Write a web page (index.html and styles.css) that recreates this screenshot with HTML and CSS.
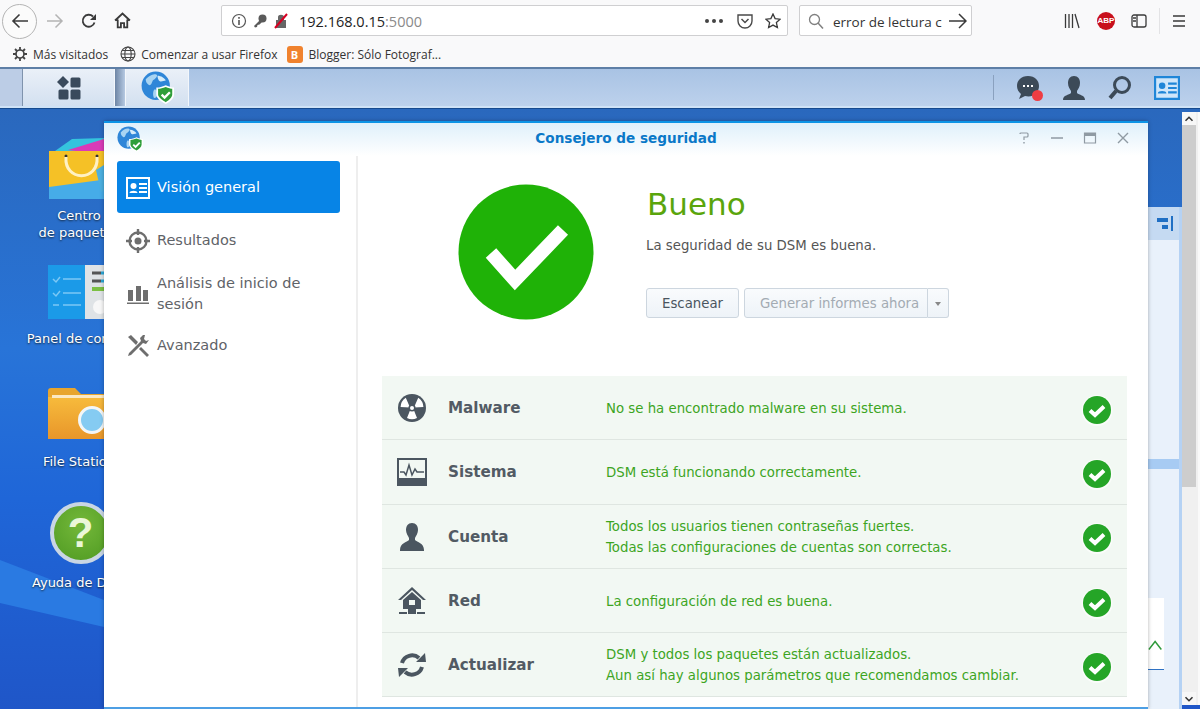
FILE: index.html
```html
<!DOCTYPE html>
<html>
<head>
    <title>Consejero de seguridad</title>
    <link rel="stylesheet" href="styles.css">
</head>
<body>
    <svg class="defs" width="0" height="0">
        <symbol id="shield-globe" viewBox="0 0 28 28">
            <circle cx="12.5" cy="12.5" r="12" fill="#2f86d8"/>
            <path d="M4 7c3-3 6-5 9-4 2 1-1 4-3 5-1 2-1 4-3 4-2-1-3-3-3-5zM11 16c2-1 3 1 3 3s-1 4-3 4c-1-2-1-5 0-7z" fill="#a9d4f2"/>
            <path d="M14 4c3 0 6 2 7 4l-4 1c-2 0-3-3-3-5z" fill="#d5ecfa"/>
            <path d="M13 14c3 0 6-1 8-2 2 1 5 2 7 2v6c0 3-3 6-7 8-4-2-8-5-8-8z" fill="#fff"/>
            <path d="M14.500 15c2 0 4-.5 6.500-1.500 2 1 4.500 1.500 5.500 1.500v5c0 2.500-2.500 4.500-5.500 6.500-3-2-6.500-4-6.500-6.500z" fill="#2f9e3a"/>
            <path d="M17.500 20l2.500 2.500 4.500-4.500" fill="none" stroke="#fff" stroke-width="2"/>
        </symbol>
        <symbol id="ok" viewBox="0 0 32 32">
            <circle cx="16" cy="16.5" r="15.5" fill="#fafcfa"/>
            <circle cx="16" cy="16" r="14" fill="#25a527"/>
            <path d="M9 16.5l5 4.500 9-8.500" fill="none" stroke="#fff" stroke-width="4"/>
        </symbol>
        <symbol id="card" viewBox="0 0 24 22">
            <path fill-rule="evenodd" d="M0 0h24v22H0zM2 2v18h20V2z"/>
            <circle cx="7.5" cy="9" r="3"/>
            <path d="M3.500 16c0-3 8-3 8 0zM13 6h8v2h-8zM13 10h8v2h-8zM13 14h8v2h-8z"/>
        </symbol>
    </svg>

    <header class="browser">
        <div class="nav-row">
            <span class="back-btn">
                <svg width="18" height="16" viewBox="0 0 18 16"><path d="M17 8H2M8.500 1.500L2 8l6.500 6.500" fill="none" stroke="#3a3a3a" stroke-width="1.6"/></svg>
            </span>
            <svg class="nav-icon" width="18" height="16" viewBox="0 0 18 16"><path d="M1 8h15M9.500 1.500L16 8l-6.500 6.500" fill="none" stroke="#b4b4b4" stroke-width="1.5"/></svg>
            <svg class="nav-icon reload" width="16" height="16" viewBox="0 0 16 16"><path d="M13.500 9.500A6 6 0 1 1 12 3.500" fill="none" stroke="#3a3a3a" stroke-width="1.8"/><path d="M15 1v6H9z" fill="#3a3a3a"/></svg>
            <svg class="nav-icon home" width="17" height="17" viewBox="0 0 16 16"><path d="M1 8l7-6.500L15 8M3.500 7v7.500h3v-4h3v4h3V7" fill="none" stroke="#3a3a3a" stroke-width="1.7"/></svg>

            <div class="urlbar">
                <svg class="url-info" width="16" height="16" viewBox="0 0 16 16"><circle cx="8" cy="8" r="6.5" fill="none" stroke="#555" stroke-width="1.2"/><path d="M7.200 7h1.600v5H7.200zM7.200 4h1.600v1.700H7.200z" fill="#555"/></svg>
                <svg width="14" height="14" viewBox="0 0 14 14"><circle cx="9.5" cy="4.5" r="4" fill="#5a5a5a"/><path d="M7 6L1 12l1 1.500L4 13l.5-2 2-.5L9 8z" fill="#5a5a5a"/></svg>
                <svg class="url-lock" width="14" height="16" viewBox="0 0 14 16"><path d="M2 7h10v8H2zM4 7V4c0-3 6-3 6 0v3" fill="#666"/><path d="M1 15L13 1" stroke="#d70022" stroke-width="2"/></svg>
                <span class="url-text">192.168.0.15<span class="url-port">:5000</span></span>
                <span class="url-dots">
                    <i></i><i></i><i></i>
                </span>
                <svg class="url-pocket" width="16" height="16" viewBox="0 0 16 16"><path d="M1 2h14v6a7 7 0 0 1-14 0z" fill="none" stroke="#4a4a4a" stroke-width="1.4"/><path d="M4.500 6L8 9.500 11.500 6" fill="none" stroke="#4a4a4a" stroke-width="1.5"/></svg>
                <svg class="url-star" width="16" height="16" viewBox="0 0 16 16"><path d="M8 1l2.100 4.600 5 .6-3.700 3.400 1 5L8 12.100l-4.400 2.500 1-5L.9 6.200l5-.6z" fill="none" stroke="#3a3a3a" stroke-width="1.3"/></svg>
            </div>

            <div class="searchbar">
                <svg width="16" height="16" viewBox="0 0 16 16"><circle cx="6.5" cy="6.5" r="5" fill="none" stroke="#808080" stroke-width="1.3"/><path d="M10 10l5 5.500" stroke="#808080" stroke-width="1.5"/></svg>
                <span class="search-text">error de lectura c</span>
                <svg class="search-go" width="18" height="16" viewBox="0 0 18 16"><path d="M0 8h17M10 1l7 7-7 7" fill="none" stroke="#3a3a3a" stroke-width="1.5"/></svg>
            </div>

            <div class="tools">
                <svg width="16" height="16" viewBox="0 0 16 16"><path d="M1.500 1v14M5 1v14M8.500 1v14M11 1l4 14" fill="none" stroke="#3a3a3a" stroke-width="1.3"/></svg>
                <span class="abp">ABP</span>
                <svg class="tool-panel" width="16" height="16" viewBox="0 0 16 16"><rect x="1" y="2" width="14" height="12" rx="2" fill="none" stroke="#3a3a3a" stroke-width="1.3"/><path d="M6 2v12M2 5h3M2 8h3" fill="none" stroke="#3a3a3a" stroke-width="1.3"/></svg>
                <span class="tool-sep"></span>
                <svg width="14" height="14" viewBox="0 0 14 14"><path d="M1 2h12M1 7h12M1 12h12" stroke="#3a3a3a" stroke-width="1.5"/></svg>
            </div>
        </div>
        <div class="bookmarks">
            <span class="bookmark"><svg width="16" height="16" viewBox="0 0 16 16"><circle cx="8" cy="8" r="4" fill="none" stroke="#444" stroke-width="1.7"/><path d="M8 1v3M8 12v3M1 8h3M12 8h3M3 3l2 2M11 11l2 2M13 3l-2 2M5 11l-2 2" stroke="#444" stroke-width="1.8"/></svg>Más visitados</span>
            <span class="bookmark"><svg width="16" height="16" viewBox="0 0 16 16"><g fill="none" stroke="#444" stroke-width="1.1"><circle cx="8" cy="8" r="7"/><ellipse cx="8" cy="8" rx="3.2" ry="7"/><path d="M1 8h14M2 4.500h12M2 11.500h12"/></g></svg>Comenzar a usar Firefox</span>
            <span class="bookmark bookmark-blog"><span class="blogger">B</span>Blogger: Sólo Fotograf...</span>
        </div>
    </header>

    <div class="taskbar">
        <span class="task-edge"></span>
        <span class="task-btn main-btn">
            <svg width="24" height="24" viewBox="0 0 24 24" fill="#3a4a5c"><path d="M6 0l6 6-6 6-6-6z"/><rect x="13.5" y="1.5" width="10" height="10" rx="1.5"/><rect x="1.5" y="13.5" width="10" height="10" rx="1.5"/><rect x="13.5" y="13.5" width="10" height="10" rx="1.5"/></svg>
        </span>
        <span class="task-gap"></span>
        <span class="task-btn app-btn"><svg width="33" height="33"><use href="#shield-globe"/></svg></span>
        <div class="task-right">
            <span class="chat">
                <svg width="24" height="26" viewBox="0 0 24 26"><path d="M12 1C5 1 1 5.500 1 11c0 3 1.500 6 4 8l-2 5 6-3c9 2 14-4 14-10C23 5.500 19 1 12 1z" fill="#3c4a58"/><path d="M7 11h2M11 11h2M15 11h2" stroke="#fff" stroke-width="2"/></svg>
                <span class="chat-dot"></span>
            </span>
            <svg width="24" height="26" viewBox="0 0 24 26" fill="#3c4a58"><path d="M12 1c4 0 6 3 6 7s-2 6-3 8v2c2 2 8 2 8 7H1c0-5 6-5 8-7v-2C8 14 6 12 6 8s2-7 6-7z"/></svg>
            <svg width="24" height="26" viewBox="0 0 24 26"><circle cx="14" cy="10" r="7.5" fill="none" stroke="#3c4a58" stroke-width="3"/><path d="M8 16l-6 7" stroke="#3c4a58" stroke-width="4"/></svg>
            <svg class="task-card" width="26" height="24"><use href="#card"/></svg>
        </div>
    </div>

    <main class="desktop">
        <div class="wave"></div>

        <!-- desktop shortcuts -->
        <div class="shortcut sc-package">
            <svg width="90" height="66" viewBox="0 0 90 66">
                <path d="M7 14L24 2l66-2v30H7z" fill="#35c4dd"/>
                <path d="M20 13L56 2h34v20z" fill="#d93bb8"/>
                <path d="M1 14h89v48H1z" fill="#46ace8"/>
                <path d="M1 14h89v24L1 50z" fill="#f5c126"/>
                <circle cx="18" cy="19" r="1.5" fill="#333"/>
                <circle cx="49" cy="19" r="1.5" fill="#333"/>
                <path d="M18 20c-2 25 33 25 31 0" fill="none" stroke="#fff1c4" stroke-width="3"/>
                <path d="M48 33l8-5 5 22-8 5z" fill="#4cb0e0"/>
            </svg>
            <span class="sc-label">Centro<br>de paquetes</span>
        </div>
        <div class="shortcut sc-panel">
            <svg width="90" height="54" viewBox="0 0 90 54">
                <rect width="38" height="54" fill="#1b9ae8"/>
                <rect x="37" width="53" height="54" fill="#dfe3e6"/>
                <path d="M5 14l3 3 4-5M15 14h18M5 28l3 3 4-5M15 28h18M5 40h6M15 40h18" fill="none" stroke="#7cc8f5" stroke-width="1.5"/>
                <path d="M44 8h9M44 16h9" stroke="#555" stroke-width="3"/>
                <path d="M53 8h12M53 16h12" stroke="#2aa7d8" stroke-width="3"/>
                <path d="M44 24h12" stroke="#7bc043" stroke-width="4"/>
                <circle cx="52" cy="42" r="7" fill="#f7f7f7"/>
            </svg>
            <span class="sc-label">Panel de control</span>
        </div>
        <div class="shortcut sc-file">
            <svg width="90" height="52" viewBox="0 0 90 52">
                <defs>
                    <linearGradient id="folder" x1="0" y1="0" x2="0" y2="1">
                        <stop offset="0" stop-color="#f7bb3c"/>
                        <stop offset="1" stop-color="#e8962a"/>
                    </linearGradient>
                </defs>
                <path d="M0 4q0-3 3-3h24l6 6h57v45H0z" fill="#e8a52d"/>
                <path d="M0 10h90v42H0z" fill="url(#folder)"/>
                <path d="M4 8h86v3H4z" fill="#fbe9c4"/>
                <circle cx="44" cy="33" r="12.5" fill="#85cbf2" stroke="#f3f6f7" stroke-width="3"/>
            </svg>
            <span class="sc-label">File Station</span>
        </div>
        <div class="shortcut sc-help">
            <span class="help-ball">?</span>
            <span class="sc-label">Ayuda de DSM</span>
        </div>

        <!-- window behind the active one -->
        <div class="back-window">
            <span class="back-tab"><svg width="16" height="16" viewBox="0 0 16 16" fill="#1f6fc4"><path d="M0 2h11v4H0zM5 9h6v4H5zM14 0h2v15h-2z"/></svg></span>
            <div class="back-pane"></div>
            <div class="back-stripe"></div>
            <div class="back-pane back-pane-low">
                <div class="back-table">
                    <svg width="18" height="14" viewBox="0 0 18 14"><path d="M1 12l7-9 7 9" fill="none" stroke="#2e9a3a" stroke-width="1.6"/></svg>
                </div>
            </div>
        </div>

        <section class="window">
            <div class="titlebar">
                <svg class="title-icon" width="26" height="26"><use href="#shield-globe"/></svg>
                <h1 class="title">Consejero de seguridad</h1>
                <div class="title-btns">
                    <svg width="14" height="14" viewBox="0 0 14 14"><path d="M3 3q0-1 1-1h6q1 0 1 1v2q0 1-1 1H7v3" fill="none" stroke="#8f9aa3" stroke-width="1.2"/><path d="M6.300 11h1.400v1.500H6.300z" fill="#8f9aa3"/></svg>
                    <svg width="14" height="14" viewBox="0 0 14 14"><path d="M1 7h12" stroke="#8f9aa3" stroke-width="1.5"/></svg>
                    <svg width="14" height="14" viewBox="0 0 14 14"><path d="M1.500 2h11v10h-11z" fill="none" stroke="#8f9aa3" stroke-width="1.2"/><path d="M1.500 2h11v3h-11z" fill="#8f9aa3"/></svg>
                    <svg width="14" height="14" viewBox="0 0 14 14"><path d="M2 2l10 10M12 2L2 12" stroke="#8f9aa3" stroke-width="1.4"/></svg>
                </div>
            </div>
            <div class="window-body">
                <nav class="sidebar">
                    <a class="side-item active"><svg width="24" height="22" fill="#fff"><use href="#card"/></svg><span>Visión general</span></a>
                    <a class="side-item">
                        <svg width="24" height="24" viewBox="0 0 24 24"><circle cx="12" cy="12" r="8.5" fill="none" stroke="#6e6e6e" stroke-width="2.4"/><circle cx="12" cy="12" r="3.5" fill="#6e6e6e"/><path d="M12 0v6M12 18v6M0 12h6M18 12h6" stroke="#6e6e6e" stroke-width="2.4"/></svg>
                        <span>Resultados</span>
                    </a>
                    <a class="side-item side-tall">
                        <svg width="24" height="22" viewBox="0 0 24 22" fill="#6e6e6e"><path d="M2 7h5v11H2zM10 3h5v15h-5zM17 7h5v11h-5zM1 19.500h22V21H1z"/></svg>
                        <span>Análisis de inicio de sesión</span>
                    </a>
                    <a class="side-item">
                        <svg width="24" height="24" viewBox="0 0 24 24" fill="#6e6e6e"><path d="M17 1l-3 3 1 3L3 19l-1 3 3-1L17 9l3 1 3-4-3 1-2-2 1-4z"/><path d="M2 3l3-2 7 7-2 3zM15 13l8 8-2 2-8-8z"/></svg>
                        <span>Avanzado</span>
                    </a>
                </nav>
                <div class="content">
                    <div class="summary">
                        <svg class="big-ok" width="136" height="136" viewBox="0 0 136 136">
                            <circle cx="68" cy="68" r="67.5" fill="#1fb207"/>
                            <path d="M33 69l24 27 48-50" fill="none" stroke="#fff" stroke-width="14"/>
                        </svg>
                        <div class="summary-text">
                            <h2 class="status">Bueno</h2>
                            <p class="status-desc">La seguridad de su DSM es buena.</p>
                            <div class="actions">
                                <button class="btn">Escanear</button>
                                <div class="split-btn">
                                    <button class="btn btn-off">Generar informes ahora</button>
                                    <button class="btn btn-arrow"><span class="caret"></span></button>
                                </div>
                            </div>
                        </div>
                    </div>

                    <div class="checks">
                        <div class="check-row">
                            <svg class="check-icon" width="30" height="30" viewBox="0 0 30 30"><circle cx="15" cy="15" r="14" fill="#4b5660"/><path d="M15 12.500L10 25a11.500 11.500 0 0 0 10 0z" fill="#fff"/><path d="M13 14.500L3.600 14a11.500 11.500 0 0 1 5.200-9.200zM17 14.500l9.400-.5a11.500 11.500 0 0 0-5.200-9.200z" fill="#fff"/><circle cx="15" cy="15" r="3.6" fill="#4b5660"/><circle cx="15" cy="15" r="2" fill="#fff"/></svg>
                            <span class="check-name">Malware</span>
                            <div class="check-text">No se ha encontrado malware en su sistema.</div>
                            <svg class="check-ok" width="32" height="32"><use href="#ok"/></svg>
                        </div>
                        <div class="check-row">
                            <svg class="check-icon" width="30" height="28" viewBox="0 0 30 28"><path fill-rule="evenodd" d="M0 0h30v28H0zM2 2v18h26V2z" fill="#4b5660"/><path d="M3 14h4l2 3 3-10 3 10 3-6 2 3h7" fill="none" stroke="#4b5660" stroke-width="1.5"/></svg>
                            <span class="check-name">Sistema</span>
                            <div class="check-text">DSM está funcionando correctamente.</div>
                            <svg class="check-ok" width="32" height="32"><use href="#ok"/></svg>
                        </div>
                        <div class="check-row">
                            <svg class="check-icon" width="30" height="30" viewBox="0 0 30 30" fill="#4b5660"><path d="M15 1c4 0 6 3 6 7 0 3-2 6-3 8v2c2 2 9 3 9 10v1H3v-1c0-7 7-8 9-10v-2c-1-2-3-5-3-8 0-4 2-7 6-7z"/></svg>
                            <span class="check-name">Cuenta</span>
                            <div class="check-text">Todos los usuarios tienen contraseñas fuertes.<br>Todas las configuraciones de cuentas son correctas.</div>
                            <svg class="check-ok" width="32" height="32"><use href="#ok"/></svg>
                        </div>
                        <div class="check-row">
                            <svg class="check-icon" width="30" height="30" viewBox="0 0 30 30" fill="#4b5660"><path d="M15 1L1 14h3l11-10 11 10h3zM15 6L6 14v9h18v-9zM12 14h6v5h-6z" fill-rule="evenodd"/><path d="M2 26h8v2H2zM20 26h8v2h-8zM11 23h8v5h-8z"/></svg>
                            <span class="check-name">Red</span>
                            <div class="check-text">La configuración de red es buena.</div>
                            <svg class="check-ok" width="32" height="32"><use href="#ok"/></svg>
                        </div>
                        <div class="check-row">
                            <svg class="check-icon" width="30" height="30" viewBox="0 0 30 30"><path d="M5 13a10.500 10.500 0 0 1 17-5M25 17a10.500 10.500 0 0 1-17 5" fill="none" stroke="#4b5660" stroke-width="4"/><path d="M19 12h10l-1-9zM11 18H1l1 9z" fill="#4b5660"/></svg>
                            <span class="check-name">Actualizar</span>
                            <div class="check-text">DSM y todos los paquetes están actualizados.<br>Aun así hay algunos parámetros que recomendamos cambiar.</div>
                            <svg class="check-ok" width="32" height="32"><use href="#ok"/></svg>
                        </div>
                    </div>
                </div>
            </div>
        </section>

        <div class="page-scroll">
            <span class="scroll-btn"><svg width="16" height="12" viewBox="0 0 16 12"><path d="M4 8l4-4 4 4" fill="none" stroke="#333" stroke-width="1.8"/></svg></span>
            <div class="scroll-track"><div class="scroll-thumb"></div></div>
            <span class="scroll-btn"><svg width="16" height="12" viewBox="0 0 16 12"><path d="M4 4l4 4 4-4" fill="none" stroke="#333" stroke-width="1.8"/></svg></span>
        </div>
    </main>
</body>
</html>
```

FILE: styles.css
```css
* {
    box-sizing: border-box;
}
html, body {
    height: 100%;
}
body {
    margin: 0;
    overflow: hidden;
    display: flex;
    flex-direction: column;
    font-family: "DejaVu Sans", sans-serif;
    background-color: #2b6dc2;
}
.defs {
    position: absolute;
}

/* browser chrome */
.browser {
    height: 67px;
    background-color: #f9f9fa;
    font-family: "Open Sans", sans-serif;
    color: #333;
}
.nav-row {
    height: 41px;
    display: flex;
    align-items: center;
    padding-left: 2px;
}
.back-btn {
    width: 35px;
    height: 35px;
    border: 1px solid #b4b4b4;
    border-radius: 50%;
    display: flex;
    align-items: center;
    justify-content: center;
    background-color: #fbfbfb;
    margin-top: 1px;
    flex: none;
}
.nav-icon {
    margin-left: 9px;
    flex: none;
}
.reload {
    margin-left: 17px;
}
.home {
    margin-left: 17px;
}
.urlbar {
    margin-left: 90px;
    width: 567px;
    height: 31px;
    background-color: #fff;
    border: 1px solid #cfcfd1;
    border-radius: 2px;
    display: flex;
    align-items: center;
    padding: 0 6px 0 9px;
    gap: 6px;
    font-size: 14.5px;
}
.url-lock {
    margin-left: 1px;
}
.url-text {
    margin-left: 5px;
    color: #222;
    position: relative;
    top: 1px;
}
.url-port {
    color: #8a8a8a;
}
.url-dots {
    margin-left: auto;
    display: flex;
    gap: 3px;
}
.url-dots i {
    width: 4px;
    height: 4px;
    border-radius: 50%;
    background-color: #444;
}
.url-pocket {
    margin-left: 8px;
}
.url-star {
    margin-left: 6px;
}
.searchbar {
    margin-left: 11px;
    width: 173px;
    height: 31px;
    background-color: #fff;
    border: 1px solid #cfcfd1;
    border-radius: 2px;
    display: flex;
    align-items: center;
    padding: 0 4px 0 8px;
    font-size: 13.5px;
}
.search-text {
    margin-left: 9px;
    white-space: nowrap;
    color: #333;
    position: relative;
    top: 1px;
}
.search-go {
    margin-left: auto;
}
.tools {
    margin-left: auto;
    padding-right: 14px;
    display: flex;
    align-items: center;
}
.abp {
    width: 18px;
    height: 18px;
    margin-left: 17px;
    border-radius: 50%;
    background-color: #c8101c;
    color: #fff;
    font-family: "Liberation Sans", sans-serif;
    font-size: 8px;
    font-weight: bold;
    line-height: 18px;
    text-align: center;
}
.tool-panel {
    margin-left: 16px;
}
.tool-sep {
    width: 1px;
    height: 26px;
    margin: 0 12px;
    background-color: #e3e3e5;
}
.bookmarks {
    height: 26px;
    display: flex;
    align-items: center;
    padding-left: 12px;
    gap: 12px;
    font-size: 12px;
}
.bookmark {
    display: flex;
    align-items: center;
    gap: 5px;
    white-space: nowrap;
}
.bookmark-blog {
    margin-left: -3px;
    gap: 6px;
}
.blogger {
    width: 16px;
    height: 17px;
    border-radius: 3px;
    background-color: #f0822e;
    color: #fff;
    font-weight: bold;
    font-size: 11px;
    line-height: 17px;
    text-align: center;
}

/* dsm taskbar */
.taskbar {
    height: 41px;
    display: flex;
    background: linear-gradient(#a9c3e4, #bcd1ec);
    border-top: 2px solid #5e7fa6;
    border-bottom: 2px solid #cfe2f6;
    box-shadow: 0 1px 0 #164a8e;
    position: relative;
    z-index: 2;
}
.task-edge {
    width: 23px;
    background-color: #bccde6;
    border-right: 1px solid #7f93ad;
}
.task-btn {
    display: flex;
    align-items: center;
    justify-content: center;
    background: linear-gradient(#eaf0f8, #d3e0f0);
    border-right: 1px solid #f2f6fb;
}
.main-btn {
    width: 92px;
}
.task-gap {
    width: 11px;
    background: linear-gradient(90deg, #6d85a5, #b6c9e2);
    border-right: 1px solid #f2f6fb;
}
.app-btn {
    width: 63px;
}
.task-right {
    margin-left: auto;
    padding-left: 23px;
    padding-right: 20px;
    display: flex;
    align-items: center;
    gap: 22px;
    position: relative;
}
.task-right::before {
    content: "";
    position: absolute;
    left: 0;
    top: 6px;
    bottom: 6px;
    width: 1px;
    background-color: #8aa1bf;
}
.chat {
    position: relative;
    display: flex;
}
.chat-dot {
    position: absolute;
    right: -3px;
    bottom: 0;
    width: 11px;
    height: 11px;
    border-radius: 50%;
    background-color: #ee3d43;
}
.task-card {
    fill: #1f86d8;
    background-color: #cfe6fa;
}

/* desktop */
.desktop {
    flex: 1;
    position: relative;
    overflow: hidden;
    background: linear-gradient(180deg, #2a68bd 0%, #2874d8 40%, #1f66d8 65%, #1f56c8 100%);
}
.wave {
    position: absolute;
    left: 0;
    top: 452px;
    width: 104px;
    height: 70px;
    background-color: #2a7ae2;
    clip-path: polygon(0 0, 100% 40px, 100% 67px, 0 43px);
}
.shortcut {
    position: absolute;
    width: 120px;
    left: 19px;
    display: flex;
    flex-direction: column;
    align-items: center;
    color: #fff;
    font-size: 13px;
    line-height: 17px;
    text-align: center;
    text-shadow: 0 1px 2px #123;
}
.shortcut svg {
    margin-left: 27px;
}
.sc-package {
    top: 29px;
}
.sc-package .sc-label {
    margin-top: 4px;
}
.sc-panel {
    top: 157px;
}
.sc-panel .sc-label {
    margin-top: 11px;
}
.sc-file {
    top: 279px;
}
.sc-file .sc-label {
    margin-top: 14px;
}
.sc-help {
    top: 394px;
}
.sc-help .sc-label {
    margin-top: 10px;
}
.sc-label {
    white-space: nowrap;
}
.help-ball {
    width: 62px;
    height: 62px;
    margin-left: 3px;
    border-radius: 50%;
    border: 4px solid #c9d6e4;
    background: radial-gradient(circle at 50% 35%, #74b83a, #4f9a22);
    color: #eaf7d8;
    font-family: "Liberation Sans", sans-serif;
    font-size: 42px;
    font-weight: bold;
    line-height: 54px;
    text-align: center;
    text-shadow: none;
}

/* window behind */
.back-window {
    position: absolute;
    left: 1140px;
    top: 99px;
    width: 42px;
    height: 590px;
    background-color: #b5d2f4;
    padding: 0 3px 11px 0;
    display: flex;
    flex-direction: column;
}
.back-tab {
    height: 33px;
    background-color: #c5daf2;
    display: flex;
    align-items: center;
    padding-left: 17px;
    flex: none;
}
.back-pane {
    height: 219px;
    background-color: #e9f1fb;
    flex: none;
}
.back-stripe {
    height: 10px;
    background-color: #a7cbf3;
    flex: none;
}
.back-pane-low {
    flex: 1;
    padding-top: 129px;
}
.back-table {
    margin-left: 8px;
    width: 16px;
    height: 72px;
    background-color: #fff;
    border-bottom: 1px solid #2f72c4;
    padding-top: 40px;
    display: flex;
    justify-content: flex-end;
}

/* active window */
.window {
    position: absolute;
    left: 104px;
    top: 13px;
    width: 1044px;
    height: 588px;
    background-color: #fff;
    border-top: 2px solid #0d94e6;
    border-bottom: 2px solid #4d9fe4;
    box-shadow: 0 0 4px rgba(0, 0, 0, 0.3);
    display: flex;
    flex-direction: column;
}
.titlebar {
    height: 33px;
    padding-bottom: 3px;
    display: flex;
    align-items: center;
    justify-content: center;
    position: relative;
    background: linear-gradient(#dff0fb, #fff);
    flex: none;
}
.title-icon {
    position: absolute;
    left: 13px;
    top: 3px;
}
.title {
    margin: 0;
    font-size: 13.6px;
    font-weight: bold;
    color: #0a78c8;
}
.title-btns {
    position: absolute;
    right: 18px;
    top: 8px;
    display: flex;
    gap: 19px;
}
.window-body {
    flex: 1;
    display: flex;
    min-height: 0;
}
.sidebar {
    width: 254px;
    padding: 5px 16px 0 13px;
    border-right: 2px solid #eeeeee;
    flex: none;
}
.side-item {
    display: flex;
    align-items: center;
    gap: 7px;
    min-height: 52px;
    padding: 1px 0 0 9px;
    font-size: 14.5px;
    line-height: 21px;
    color: #5f6368;
    border-radius: 3px;
}
.side-item svg {
    flex: none;
}
.side-tall {
    min-height: 54px;
    margin-bottom: -1px;
}
.side-item.active {
    background-color: #0784e6;
    color: #fff;
    margin-bottom: 1px;
}
.content {
    flex: 1;
    padding: 28px 21px 0 24px;
    min-width: 0;
}
.summary {
    display: flex;
    height: 192px;
}
.big-ok {
    margin-left: 76px;
    flex: none;
}
.summary-text {
    margin-left: 52px;
}
.status {
    margin: 1px 0 0 1px;
    font-size: 31px;
    font-weight: normal;
    line-height: 38px;
    color: #5aa50c;
}
.status-desc {
    margin: 14px 0 0;
    font-size: 13.3px;
    line-height: 18px;
    color: #555;
}
.actions {
    margin-top: 33px;
    display: flex;
    gap: 5px;
}
.btn {
    height: 30px;
    padding: 0 15px;
    border: 1px solid #cdd6df;
    border-radius: 3px;
    background: linear-gradient(#f9fbfd, #eef3f8);
    font-family: inherit;
    font-size: 13.3px;
    color: #4a5560;
}
.split-btn {
    display: flex;
}
.btn-off {
    padding: 0 8px 0 15px;
    color: #a3abb3;
    border-radius: 3px 0 0 3px;
}
.btn-arrow {
    width: 21px;
    padding: 0;
    border-left: none;
    border-radius: 0 3px 3px 0;
}
.caret {
    display: inline-block;
    border: 3px solid transparent;
    border-top: 4px solid #888;
    border-bottom: none;
    vertical-align: middle;
}
.checks {
    background-color: #f2f8f3;
}
.check-row {
    height: 64.3px;
    padding-top: 1px;
    display: flex;
    align-items: center;
    border-bottom: 1px solid #dfe6e1;
}
.check-icon {
    flex: none;
    margin-left: 15px;
}
.check-name {
    width: 158px;
    margin-left: 21px;
    font-size: 15.2px;
    font-weight: bold;
    color: #525b64;
    flex: none;
}
.check-text {
    flex: 1;
    font-size: 13.3px;
    line-height: 21px;
    color: #3da51f;
}
.check-ok {
    margin: 3px 14px 0 0;
    flex: none;
}

/* browser scrollbar */
.page-scroll {
    position: absolute;
    right: 0;
    top: 4px;
    bottom: 4px;
    width: 18px;
    padding-right: 2px;
    display: flex;
    flex-direction: column;
    background-color: #f0f0f0;
    border-right: 2px solid #fafafa;
    z-index: 3;
}
.scroll-btn {
    height: 13px;
    background-color: #f7f7f7;
    display: flex;
    align-items: center;
    flex: none;
}
.scroll-track {
    flex: 1;
}
.scroll-thumb {
    height: 362px;
    background-color: #cdcdcd;
}
```
